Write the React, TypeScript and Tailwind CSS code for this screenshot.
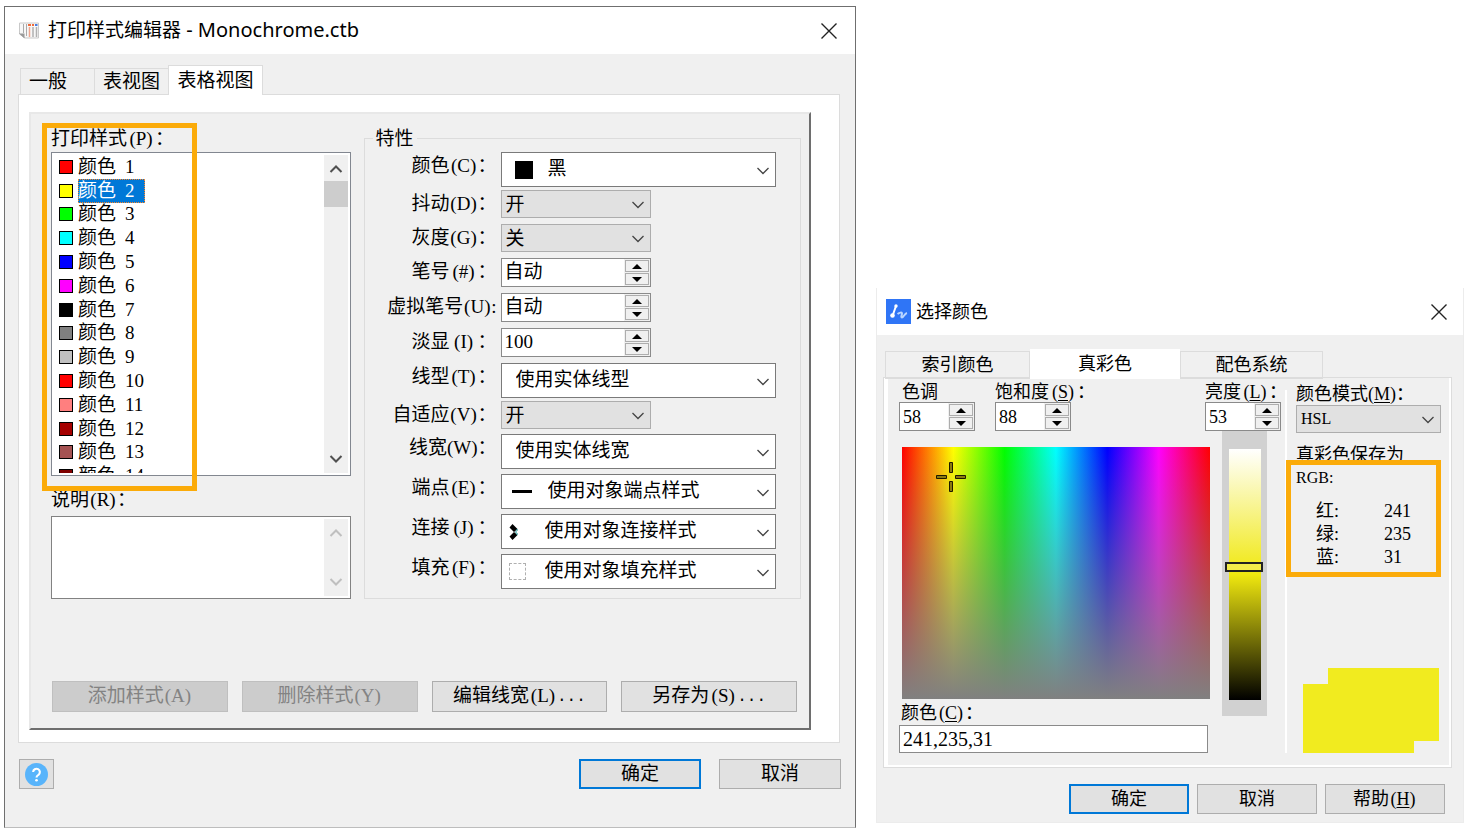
import type { ReactNode } from "react";
import clsx from "clsx";

const styles = [
  { name: "1", color: "#ff0000" },
  { name: "2", color: "#ffff00" },
  { name: "3", color: "#00ff00" },
  { name: "4", color: "#00ffff" },
  { name: "5", color: "#0000ff" },
  { name: "6", color: "#ff00ff" },
  { name: "7", color: "#000000" },
  { name: "8", color: "#808080" },
  { name: "9", color: "#c0c0c0" },
  { name: "10", color: "#ff0000" },
  { name: "11", color: "#ff7f7f" },
  { name: "12", color: "#a50000" },
  { name: "13", color: "#a55252" },
  { name: "14", color: "#7f0000" }
];

const channels = [
  { label: "红", value: "241" },
  { label: "绿", value: "235" },
  { label: "蓝", value: "31" }
];

type CaptionProps = { text: string; hotkey: string; underline?: boolean; end?: string };

function Caption({ text, hotkey, underline, end = "：" }: CaptionProps) {
  return (
    <>
      {text}
      <span className="inline-block min-w-7 text-center">
        ({underline ? <u className="underline-offset-2">{hotkey}</u> : hotkey})
      </span>
      {end}
    </>
  );
}

function Chevron({ className, up }: { className?: string; up?: boolean }) {
  return (
    <svg
      viewBox="0 0 14 8"
      className={clsx("h-2 w-3.5", className)}
      fill="none"
      stroke="currentColor"
      strokeWidth="1.3"
      aria-hidden="true"
    >
      <path d={up ? "M1.5 7 7 1.5 12.5 7" : "M1.5 1 7 6.5 12.5 1"} />
    </svg>
  );
}

function CloseButton() {
  return (
    <button type="button" aria-label="关闭" className="flex size-6 items-center justify-center">
      <svg viewBox="0 0 16 16" className="size-4" fill="none" stroke="#222" strokeWidth="1.4">
        <path d="M.5.5l15 15M15.5.5l-15 15" />
      </svg>
    </button>
  );
}

type SelectProps = {
  id: string;
  value: string;
  narrow?: boolean;
  className?: string;
  pad?: string;
  icon?: ReactNode;
};

function Select({ id, value, narrow, className = "w-full", pad = "pl-1", icon }: SelectProps) {
  return (
    <div className={clsx("relative", className)}>
      <select
        id={id}
        className={clsx(
          "block w-full appearance-none border",
          narrow ? "h-7 border-[#adadad] bg-[#e1e1e1]" : "h-[35px] border-[#7a7a7a] bg-white",
          pad
        )}
      >
        <option>{value}</option>
      </select>
      {icon && (
        <span className="pointer-events-none absolute inset-y-0 left-0 flex items-center">{icon}</span>
      )}
      <Chevron className="pointer-events-none absolute top-1/2 right-1.5 -mt-[3px] text-[#444]" />
    </div>
  );
}

function SpinButton({ up }: { up?: boolean }) {
  return (
    <button
      type="button"
      aria-label={up ? "增加" : "减少"}
      className="flex flex-1 items-center justify-center border border-[#adadad] bg-[#f0f0f0]"
    >
      <svg viewBox="0 0 10 5" className="h-[5px] w-2.5" aria-hidden="true">
        <path d={up ? "M0 5 5 0l5 5z" : "M0 0h10L5 5z"} />
      </svg>
    </button>
  );
}

function Spinner({ id, value, className }: { id: string; value: string; className: string }) {
  return (
    <div className={clsx("flex h-[29px] border border-[#8a8a8a] bg-white", className)}>
      <input id={id} defaultValue={value} className="w-0 flex-1 bg-transparent pl-[3px] outline-none" />
      <div className="flex w-[26px] flex-col gap-px bg-[#f0f0f0] p-px">
        <SpinButton up />
        <SpinButton />
      </div>
    </div>
  );
}

type RowProps = { id: string; text: string; hotkey: string; end?: string; className?: string; children: ReactNode };

function Row({ id, text, hotkey, end, className, children }: RowProps) {
  return (
    <div className={clsx("flex items-start gap-1", className)}>
      <label htmlFor={id} className="w-[132px] shrink-0 text-right leading-7 whitespace-nowrap">
        <Caption text={text} hotkey={hotkey} end={end} />
      </label>
      {children}
    </div>
  );
}

function Scrollbar({ disabled, thumb }: { disabled?: boolean; thumb?: boolean }) {
  const tone = disabled ? "text-[#bfbfbf]" : "text-[#505050]";
  return (
    <div className="my-0.5 mr-0.5 flex w-6 flex-col items-center bg-[#f0f0f0] py-2.5" aria-hidden="true">
      <Chevron up className={clsx("stroke-2", tone)} />
      {thumb && <div className="mt-2 h-[26px] w-full bg-[#cdcdcd]" />}
      <Chevron className={clsx("mt-auto stroke-2", tone)} />
    </div>
  );
}

type ButtonProps = { children: ReactNode; primary?: boolean; disabled?: boolean; className?: string };

function Button({ children, primary, disabled, className }: ButtonProps) {
  return (
    <button
      type="button"
      disabled={disabled}
      className={clsx(
        "flex items-center justify-center whitespace-nowrap",
        primary ? "border-2 border-[#0078d7]" : "border",
        !primary && (disabled ? "border-[#bfbfbf]" : "border-[#adadad]"),
        disabled ? "bg-[#cccccc] text-[#838383]" : "bg-[#e1e1e1]",
        className
      )}
    >
      {children}
    </button>
  );
}

function Dots() {
  return <span className="font-['Liberation_Mono'] text-base">...</span>;
}

function PlotStyleEditor() {
  return (
    <section className="min-w-0 border border-[#6f6f6f] border-b-[#bdbdbd] bg-[#f0f0f0] text-[19px]">
      <header className="flex h-[47px] items-center bg-white pr-3.5 pl-[13px]">
        <svg viewBox="0 0 22 18" className="h-[18px] w-[22px]" aria-hidden="true">
          <path d="M1.500 1h19v15H7L1.500 12z" fill="#f7f7f7" stroke="#c9c9c9" />
          <path d="M1 11.500h5.500v5z" fill="#999" />
          <path d="M5.500 2v9M8.500 2v12" stroke="#aaa" />
          <path d="M11.500 5v10" stroke="#efa68f" strokeWidth="1.500" />
          <path d="M15 5v10M18.500 5v10" stroke="#b0b0b0" strokeWidth="1.500" />
          <path d="M10 3h3M14 3h2" stroke="#ef6b3b" strokeWidth="2" />
          <path d="M17 3h2.500" stroke="#4a7de0" strokeWidth="2" />
        </svg>
        <h1 className="ml-2 flex-1 font-['Noto_Sans','Noto_Sans_CJK_SC',sans-serif]">
          打印样式编辑器<span className="text-xl"> - Monochrome.ctb</span>
        </h1>
        <CloseButton />
      </header>

      <div className="pt-[11px] pr-[15px] pb-[38px] pl-[13px]">
        <div role="tablist" className="relative -mb-px flex items-end pl-0.5">
          <button type="button" role="tab" className="h-[27px] w-[75px] border border-[#dcdcdc] pl-2 text-left leading-6">
            一般
          </button>
          <button type="button" role="tab" className="-ml-px h-[27px] w-[75px] border border-[#dcdcdc] leading-6">
            表视图
          </button>
          <button
            type="button"
            role="tab"
            aria-selected="true"
            className="-ml-px h-[30px] w-[95px] border border-b-0 border-[#dcdcdc] bg-white leading-6"
          >
            表格视图
          </button>
        </div>

        <div className="border border-[#dcdcdc] bg-white pt-[17px] pr-7 pb-3 pl-2.5">
          <div className="border-2 border-[#e8e8e8] border-r-[#6e6e6e] border-b-[#6e6e6e] bg-[#f0f0f0] pt-[11px] pr-2 pb-4 pl-5">
            <div className="grid grid-cols-[300fr_438fr] gap-[13px]">
              <div className="relative flex min-w-0 flex-col">
                <h2 id="style-list" className="h-[27px] leading-7">
                  <Caption text="打印样式" hotkey="P" />
                </h2>
                <div className="flex h-[324px] overflow-hidden border border-[#828790] bg-white">
                  <div className="my-0.5 flex-1 overflow-hidden">
                    <ul role="listbox" aria-labelledby="style-list" className="grid h-[333px] auto-rows-fr pl-[7px]">
                      {styles.map((style) => (
                        <li
                          key={style.name}
                          role="option"
                          aria-selected={style.name === "2"}
                          className="flex items-center gap-[5px]"
                        >
                          <span className="size-3.5 border border-black" style={{ backgroundColor: style.color }} />
                          <span
                            className={clsx(
                              "flex w-[67px] gap-[9px] leading-6",
                              style.name === "2" &&
                                "bg-[#0078d7] text-white outline-1 -outline-offset-1 outline-[#ff8728] outline-dotted"
                            )}
                          >
                            <span>颜色</span>
                            <span>{style.name}</span>
                          </span>
                        </li>
                      ))}
                    </ul>
                  </div>
                  <Scrollbar thumb />
                </div>
                <label htmlFor="description" className="mt-[10px] mb-0.5 h-7 leading-7">
                  <Caption text="说明" hotkey="R" />
                </label>
                <div className="flex h-[83px] border border-[#828282] bg-white">
                  <textarea id="description" className="w-0 flex-1 resize-none p-1 outline-none" />
                  <Scrollbar disabled />
                </div>
                <div className="pointer-events-none absolute -top-0.5 -left-[9px] h-[368px] w-[155px] border-5 border-[#fbab09]" />
              </div>

              <fieldset className="min-w-0 border border-[#dcdcdc] pr-6 pb-2">
                <legend className="ml-2 h-[27px] px-[3px] leading-7">特性</legend>
                <Row id="color" text="颜色" hotkey="C">
                  <Select id="color" value="黑" pad="pl-[46px]" icon={<span className="ml-3.5 size-[18px] bg-black" />} />
                </Row>
                <Row id="dither" text="抖动" hotkey="D" className="mt-[3px]">
                  <Select id="dither" value="开" narrow className="w-[150px]" />
                </Row>
                <Row id="gray" text="灰度" hotkey="G" className="mt-1.5">
                  <Select id="gray" value="关" narrow className="w-[150px]" />
                </Row>
                <Row id="pen" text="笔号" hotkey="#" className="mt-1.5">
                  <Spinner id="pen" value="自动" className="w-[150px]" />
                </Row>
                <Row id="virtual-pen" text="虚拟笔号" hotkey="U" end=":" className="mt-1.5">
                  <Spinner id="virtual-pen" value="自动" className="w-[150px]" />
                </Row>
                <Row id="screening" text="淡显" hotkey="I" className="mt-1.5">
                  <Spinner id="screening" value="100" className="w-[150px]" />
                </Row>
                <Row id="linetype" text="线型" hotkey="T" className="mt-1.5">
                  <Select id="linetype" value="使用实体线型" pad="pl-3.5" />
                </Row>
                <Row id="adaptive" text="自适应" hotkey="V" className="mt-[3px]">
                  <Select id="adaptive" value="开" narrow className="w-[150px]" />
                </Row>
                <Row id="lineweight" text="线宽" hotkey="W" className="mt-[5px]">
                  <Select id="lineweight" value="使用实体线宽" pad="pl-3.5" />
                </Row>
                <Row id="end-style" text="端点" hotkey="E" className="mt-[5px]">
                  <Select
                    id="end-style"
                    value="使用对象端点样式"
                    pad="pl-[46px]"
                    icon={<span className="ml-[11px] h-[3px] w-5 bg-black" />}
                  />
                </Row>
                <Row id="join-style" text="连接" hotkey="J" className="mt-[5px]">
                  <Select
                    id="join-style"
                    value="使用对象连接样式"
                    pad="pl-[43px]"
                    icon={
                      <svg viewBox="0 0 10 16" className="ml-2 h-4 w-2.5">
                        <path d="M3.500 0 8.500 5 5 8 .5 3.500zM5 8l3.500 3L3.500 16 .5 12.500z" />
                        <path d="M7 5.500h2v1H7zM6 7.500h2v1H6zM7 9.500h2v1H7z" fill="#0e8f8f" />
                      </svg>
                    }
                  />
                </Row>
                <Row id="fill-style" text="填充" hotkey="F" className="mt-[5px]">
                  <Select
                    id="fill-style"
                    value="使用对象填充样式"
                    pad="pl-[43px]"
                    icon={<span className="ml-2 size-[17px] border border-dashed border-[#b0b0b0]" />}
                  />
                </Row>
              </fieldset>
            </div>

            <div className="mt-[82px] mr-1 ml-px grid grid-cols-4 gap-3.5">
              <Button disabled className="h-[31px]">
                <Caption text="添加样式" hotkey="A" end="" />
              </Button>
              <Button disabled className="h-[31px]">
                <Caption text="删除样式" hotkey="Y" end="" />
              </Button>
              <Button className="h-[31px]">
                <Caption text="编辑线宽" hotkey="L" end="" />
                <Dots />
              </Button>
              <Button className="h-[31px]">
                <Caption text="另存为" hotkey="S" end="" />
                <Dots />
              </Button>
            </div>
          </div>
        </div>

        <footer className="mt-4 -mr-px flex items-center pl-px">
          <button
            type="button"
            aria-label="帮助"
            className="flex h-[30px] w-[35px] items-center justify-center border border-[#adadad] bg-[#e1e1e1]"
          >
            <svg viewBox="0 0 24 24" className="size-[23px]" fill="none" aria-hidden="true">
              <circle cx="12" cy="12" r="12" fill="#58b4fb" />
              <path d="M8.500 9.500a3.500 3.500 0 1 1 5.500 2.900c-1.500.9-2 1.500-2 2.800" stroke="#fff" strokeWidth="2.200" />
              <circle cx="12" cy="18" r="1.400" fill="#fff" />
            </svg>
          </button>
          <Button primary className="ml-auto h-[30px] w-[122px]">
            确定
          </Button>
          <Button className="ml-[18px] h-[30px] w-[122px]">取消</Button>
        </footer>
      </div>
    </section>
  );
}

function ColorPicker() {
  return (
    <section className="mb-[5px] min-w-0 border border-t-0 border-[#ececec] bg-[#f0f0f0] text-lg">
      <header className="flex h-[47px] items-center bg-white pr-3 pl-[9px]">
        <svg viewBox="0 0 25 25" className="size-[25px]" fill="none" aria-hidden="true">
          <path d="M0 0h25v25H0z" fill="#2f75f6" />
          <path d="M6.500 17 10 7" stroke="#fff" strokeWidth="2" />
          <circle cx="6.500" cy="16.500" r="2.300" fill="#fff" />
          <circle cx="10" cy="7" r="1.700" fill="#fff" />
          <path d="M11.500 15c2-1.500 4.500-2 4.500-.5s-1.500 4 0 4 2.500-4 5-4.500" stroke="#b9d5ff" strokeWidth="2" />
        </svg>
        <h1 className="ml-[5px] flex-1">选择颜色</h1>
        <CloseButton />
      </header>

      <div className="pt-3.5 pr-[11px] pb-2 pl-1.5">
        <div role="tablist" className="relative -mb-0.5 flex items-end pl-0.5">
          <button type="button" role="tab" className="h-7 w-[145px] border border-[#dcdcdc] leading-6">
            索引颜色
          </button>
          <button type="button" role="tab" aria-selected="true" className="h-[30px] w-[150px] bg-white leading-6">
            真彩色
          </button>
          <button type="button" role="tab" className="h-7 w-[143px] border border-[#dcdcdc] leading-6">
            配色系统
          </button>
        </div>

        <div className="border border-[#dcdcdc] bg-white pr-0.5 pb-0.5 pl-1">
          <div className="flex bg-[#f0f0f0] pb-3">
            <div className="min-w-0 flex-1 pr-[18px] pl-[11px]">
              <div className="flex">
                <div>
                  <label htmlFor="hue" className="block h-6 pl-[3px] leading-7">
                    色调
                  </label>
                  <Spinner id="hue" value="58" className="w-[76px]" />
                </div>
                <div className="ml-5">
                  <label htmlFor="saturation" className="block h-6 w-[76px] leading-7 whitespace-nowrap">
                    <Caption text="饱和度" hotkey="S" underline />
                  </label>
                  <Spinner id="saturation" value="88" className="w-[76px]" />
                </div>
                <div className="-mr-3.5 ml-auto">
                  <label htmlFor="lightness" className="block h-6 w-[76px] leading-7 whitespace-nowrap">
                    <Caption text="亮度" hotkey="L" underline />
                  </label>
                  <Spinner id="lightness" value="53" className="w-[76px]" />
                </div>
              </div>

              <div className="flex gap-3">
                <div className="min-w-0 flex-1 pt-4">
                  <div className="relative ml-[3px] h-[252px] bg-[linear-gradient(to_bottom,rgba(128,128,128,0),#808080),linear-gradient(to_right,red,yellow,lime,cyan,blue,magenta,red)]">
                    <svg
                      viewBox="0 0 32 32"
                      className="absolute top-[12%] left-[16%] -mt-4 -ml-4 size-8"
                      fill="#8a7a10"
                      stroke="#1e1a00"
                      aria-hidden="true"
                    >
                      <path d="M14.500 1.500h3v10h-3zM14.500 20.500h3v10h-3zM1.500 14.500h10v3h-10zM20.500 14.500h10v3h-10z" />
                    </svg>
                  </div>
                  <label htmlFor="rgb" className="block h-[26px] pl-0.5 leading-7">
                    <Caption text="颜色" hotkey="C" underline />
                  </label>
                  <div className="pr-0.5">
                    <input
                      id="rgb"
                      defaultValue="241,235,31"
                      className="block h-7 w-full border border-[#8a8a8a] bg-white pl-[3px] text-xl outline-none"
                    />
                  </div>
                </div>
                <div className="h-[285px] w-[45px] bg-[#d1d1d1] pt-[18px] pl-[7px]">
                  <input
                    type="range"
                    aria-label="亮度"
                    defaultValue="53"
                    className="block h-[251px] w-8 appearance-none bg-[linear-gradient(to_bottom,white,#f0e80f_50%,black)] [direction:rtl] [writing-mode:vertical-lr] [&::-webkit-slider-thumb]:-ml-[3px] [&::-webkit-slider-thumb]:h-[10px] [&::-webkit-slider-thumb]:w-[38px] [&::-webkit-slider-thumb]:appearance-none [&::-webkit-slider-thumb]:border-2 [&::-webkit-slider-thumb]:border-[#222] [&::-webkit-slider-thumb]:bg-[#f3ec4a]"
                  />
                </div>
              </div>
            </div>

            <div className="mt-3 flex w-[164px] flex-col border-l-2 border-white pl-[9px]">
              <label htmlFor="mode" className="-mt-3 h-[27px] leading-8 whitespace-nowrap">
                <Caption text="颜色模式" hotkey="M" underline />
              </label>
              <div className="text-base">
                <Select id="mode" value="HSL" narrow className="w-[145px]" />
              </div>
              <div className="relative mt-3">
                <p className="leading-[21px]">
                  真彩色保存为
                  <br />
                  <span className="text-base">RGB:</span>
                </p>
                <dl className="mt-[10px] pl-5">
                  {channels.map((channel) => (
                    <div key={channel.label} className="flex leading-[23px]">
                      <dt className="w-[68px]">{channel.label}:</dt>
                      <dd>{channel.value}</dd>
                    </div>
                  ))}
                </dl>
                <div className="pointer-events-none absolute top-[15px] -left-[10px] h-[117px] w-[155px] border-5 border-[#fbab09]" />
              </div>
              <svg viewBox="0 0 136 85" className="mt-auto ml-[7px] h-[85px] w-[136px]" aria-hidden="true">
                <path d="M25 0h111v73h-25v12H0V16h25z" fill="#f1eb1f" />
              </svg>
            </div>
          </div>
        </div>

        <footer className="mt-4 -mr-px flex justify-end gap-2 pr-2">
          <Button primary className="h-[30px] w-[120px]">
            确定
          </Button>
          <Button className="h-[30px] w-[120px]">取消</Button>
          <Button className="h-[30px] w-[120px]">
            <Caption text="帮助" hotkey="H" underline end="" />
          </Button>
        </footer>
      </div>
    </section>
  );
}

export default function App() {
  return (
    <main className="grid grid-cols-[852fr_588fr] items-end gap-5 bg-white pt-1.5 pr-[3px] pl-1 font-['Liberation_Serif','Noto_Sans_CJK_SC',serif] text-black">
      <PlotStyleEditor />
      <ColorPicker />
    </main>
  );
}
